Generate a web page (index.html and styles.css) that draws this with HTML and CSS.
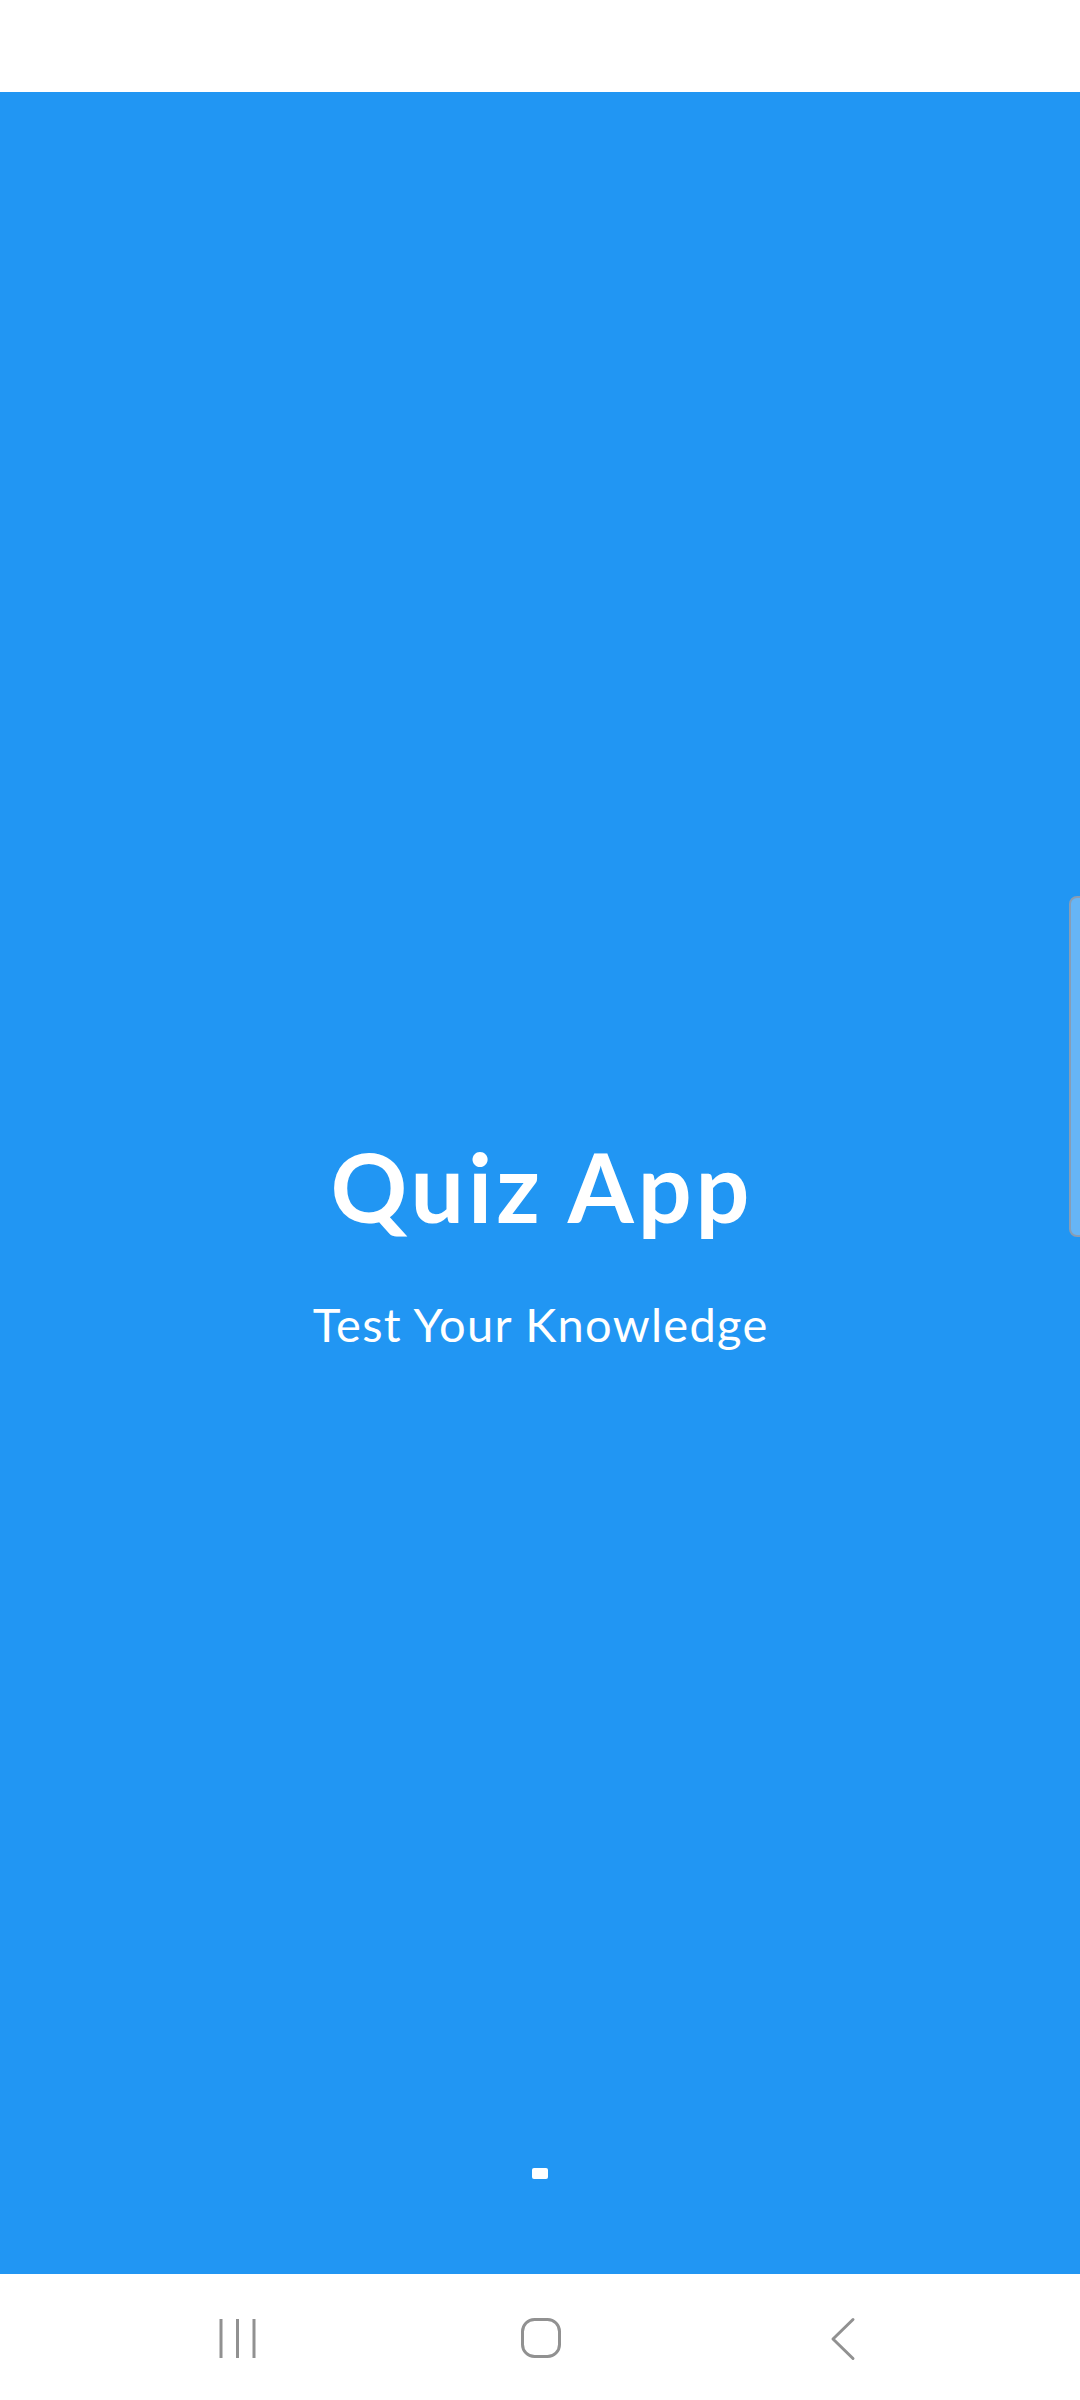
FILE: index.html
```html
<!DOCTYPE html>
<html lang="en">
<head>
<meta charset="utf-8">
<title>Quiz App</title>
<link rel="stylesheet" href="styles.css">
</head>
<body>
<div class="screen">
  <div class="status-bar"></div>
  <main class="splash">
    <div class="brand">
      <h1 class="title">Quiz App</h1>
      <p class="subtitle">Test Your Knowledge</p>
    </div>
    <div class="loader"></div>
    <div class="edge-handle"></div>
  </main>
  <nav class="nav-bar">
    <svg class="nav-icon" width="80" height="46" viewBox="0 0 80 46">
      <g stroke="#919191" stroke-width="3" fill="none">
        <line x1="24" y1="3" x2="24" y2="42"/>
        <line x1="40.5" y1="3" x2="40.5" y2="42"/>
        <line x1="57" y1="3" x2="57" y2="42"/>
      </g>
    </svg>
    <svg class="nav-icon" width="80" height="46" viewBox="0 0 80 46">
      <rect x="22.5" y="3.5" width="37" height="37" rx="12" stroke="#919191" stroke-width="3" fill="none"/>
    </svg>
    <svg class="nav-icon" width="80" height="46" viewBox="0 0 80 46">
      <polyline points="50,3.5 30,23 50,42.5" stroke="#919191" stroke-width="3" fill="none" stroke-linecap="round" stroke-linejoin="round"/>
    </svg>
  </nav>
</div>
</body>
</html>
```
FILE: styles.css
```css
html, body {
  margin: 0;
  padding: 0;
  background: #ffffff;
}

.screen {
  width: 1080px;
  height: 2400px;
  display: flex;
  flex-direction: column;
  font-family: Lato, "Noto Sans", "Open Sans", sans-serif;
}

.status-bar {
  height: 92px;
  background: #ffffff;
  flex: none;
}

.splash {
  position: relative;
  flex: 1;
  background: #2196f3;
  display: flex;
  flex-direction: column;
  align-items: center;
  padding-top: 1034px;
  padding-bottom: 95px;
  box-sizing: border-box;
}

.brand {
  display: flex;
  flex-direction: column;
  align-items: center;
}

.title {
  margin: 0;
  color: #ffffff;
  font-size: 95px;
  line-height: 120px;
  font-weight: 700;
  letter-spacing: 4px;
  padding-left: 4px;
}

.subtitle {
  margin: 48px 0 0;
  color: #ffffff;
  font-size: 47px;
  line-height: 60px;
  font-weight: 400;
  letter-spacing: 1.3px;
  padding-left: 1.3px;
}

.loader {
  margin-top: auto;
  width: 16px;
  height: 11px;
  background: #ffffff;
  border-radius: 2px;
}

.edge-handle {
  position: absolute;
  right: -2px;
  top: 804px;
  width: 9px;
  height: 337px;
  background: #66b5f6;
  border: 2px solid #8a9db3;
  border-radius: 8px 0 0 8px;
}

.nav-bar {
  height: 126px;
  flex: none;
  background: #ffffff;
  display: flex;
  justify-content: center;
  align-items: flex-start;
  gap: 223px;
  padding-top: 42px;
  box-sizing: border-box;
}

.nav-icon {
  display: block;
}
```
